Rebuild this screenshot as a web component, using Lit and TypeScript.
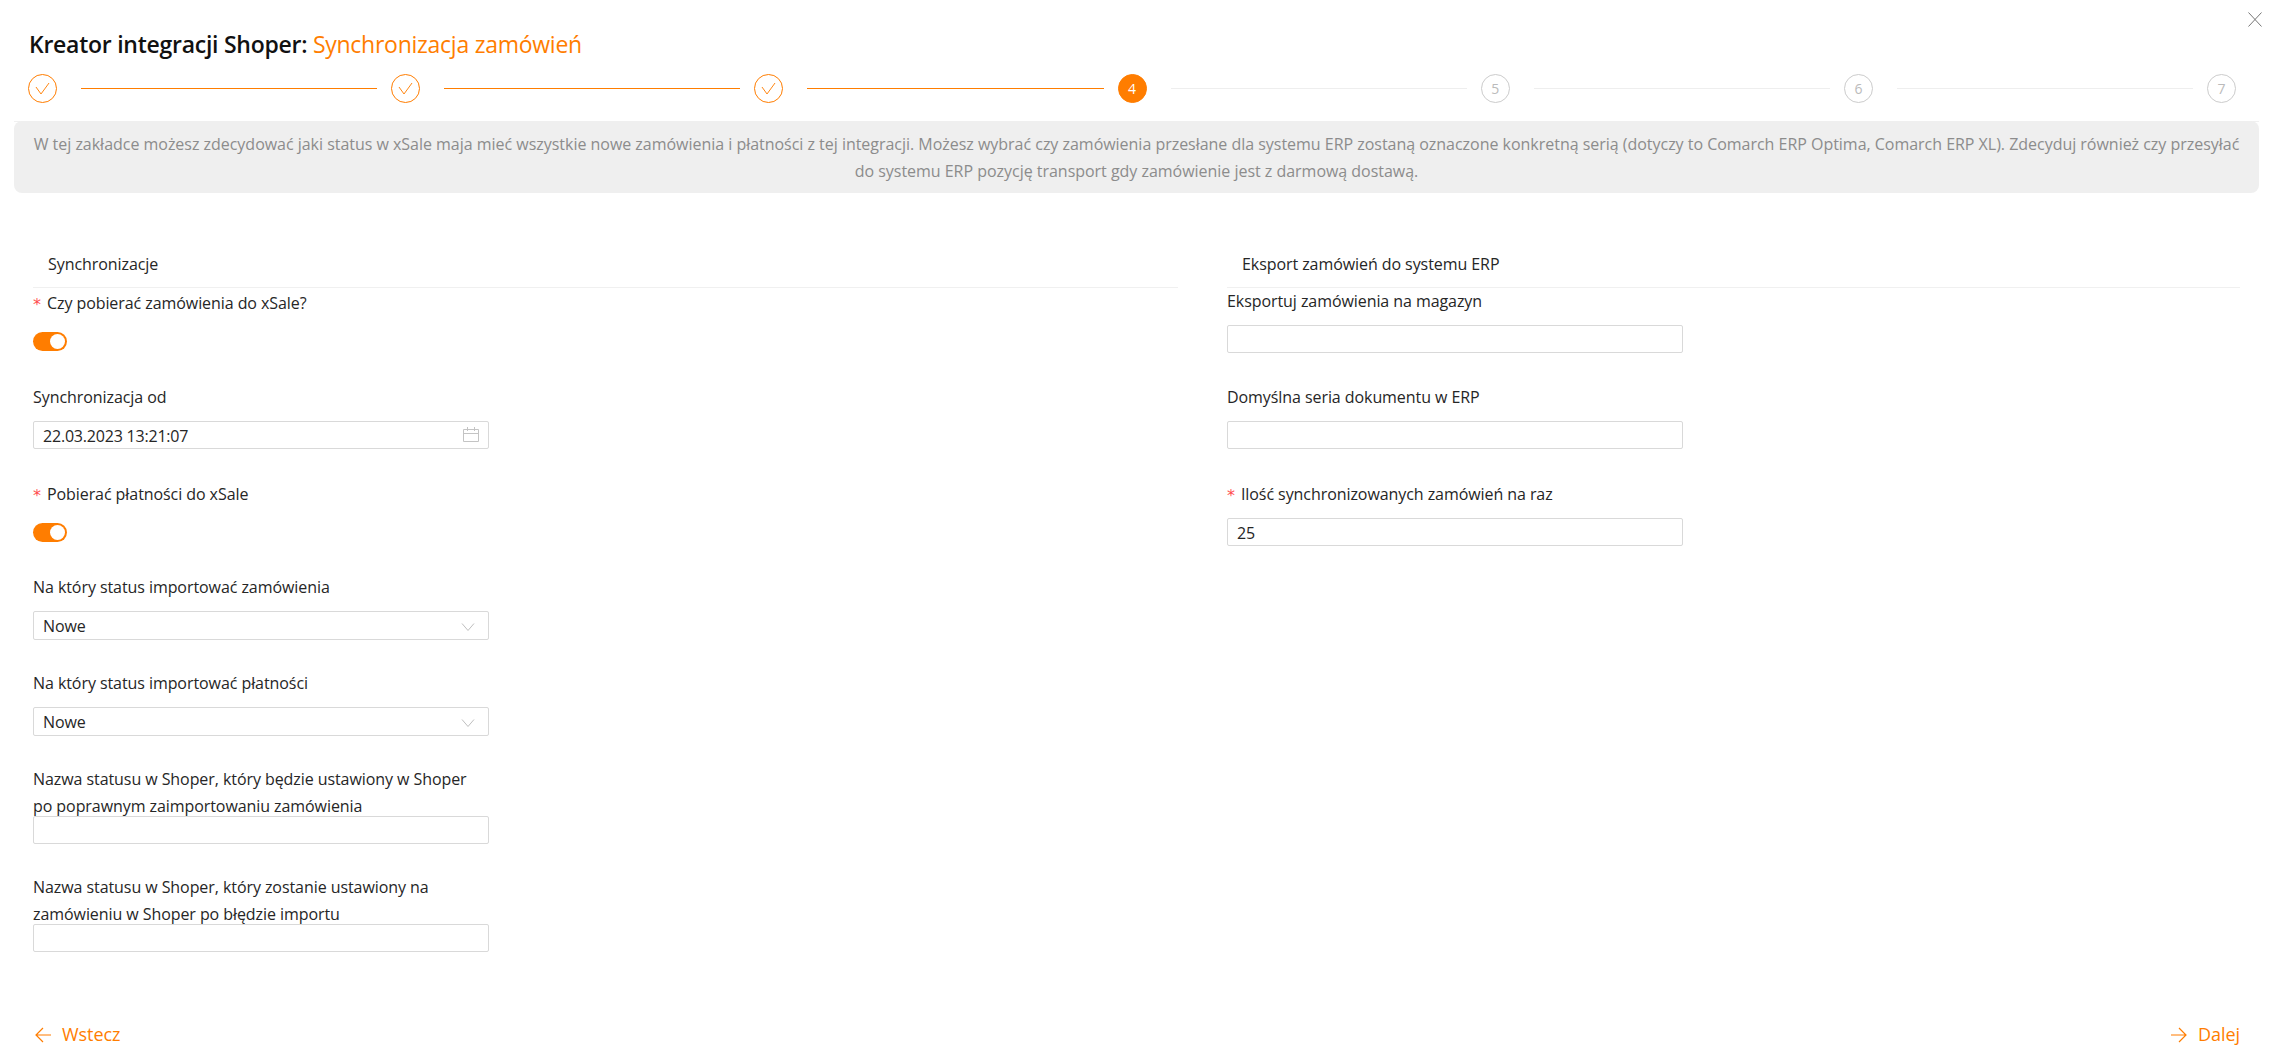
import { LitElement, html, css, svg } from "lit";
import { customElement } from "lit/decorators.js";

const checkIcon = svg`<path d="M7.5 12.9 L12.9 20.4 L21.5 8.6" fill="none" stroke="#ff7d00" stroke-width="1"/>`;

type Field = { label: string[]; req?: boolean; kind: "toggle" | "input" | "select" | "date"; value?: string; gap: number };

const left: Field[] = [
  { label: ["Czy pobierać zamówienia do xSale?"], req: true, kind: "toggle", gap: 2 },
  { label: ["Synchronizacja od"], kind: "date", value: "22.03.2023 13:21:07", gap: 33 },
  { label: ["Pobierać płatności do xSale"], req: true, kind: "toggle", gap: 32 },
  { label: ["Na który status importować zamówienia"], kind: "select", value: "Nowe", gap: 32 },
  { label: ["Na który status importować płatności"], kind: "select", value: "Nowe", gap: 30 },
  { label: ["Nazwa statusu w Shoper, który będzie ustawiony w Shoper", "po poprawnym zaimportowaniu zamówienia"], kind: "input", gap: 30 },
  { label: ["Nazwa statusu w Shoper, który zostanie ustawiony na", "zamówieniu w Shoper po błędzie importu"], kind: "input", gap: 30 },
];

const right: Field[] = [
  { label: ["Eksportuj zamówienia na magazyn"], kind: "input", gap: 0 },
  { label: ["Domyślna seria dokumentu w ERP"], kind: "input", gap: 31 },
  { label: ["Ilość synchronizowanych zamówień na raz"], req: true, kind: "input", value: "25", gap: 32 },
];

@customElement("app-root")
export class AppRoot extends LitElement {
  static styles = css`
    :host {
      display: block;
      width: 2275px;
      height: 1059px;
      position: relative;
      overflow: hidden;
      background: #fff;
      color: #262626;
      font-family: "Open Sans", "Liberation Sans", sans-serif;
      font-size: 16px;
      letter-spacing: -0.07px;
      line-height: 27px;
    }
    .close { position: absolute; left: 2247px; top: 11px; width: 16px; height: 16px; }
    .title {
      margin: 0;
      padding: 28px 0 0 29px;
      height: 32px;
      font-size: 23px;
      line-height: 32px;
      font-weight: 600;
      color: #111;
      letter-spacing: -0.26px;
    }
    .title span { color: #ff7d00; font-weight: 400; }
    .steps { display: flex; padding: 14px 39px 0 28px; }
    .step { flex: 1; display: flex; align-items: center; }
    .step:last-child { flex: 0 0 29px; }
    .circle {
      box-sizing: border-box;
      flex: 0 0 29px;
      height: 29px;
      border-radius: 50%;
      border: 1px solid #ccc;
      color: #bbb;
      font-size: 14px;
      line-height: 27px;
      text-align: center;
    }
    .circle.done { border-color: #ff7d00; }
    .circle.done svg { display: block; width: 27px; height: 27px; }
    .circle.active { background: #ff7d00; border-color: #ff7d00; color: #fff; }
    .line { flex: 1; height: 1px; margin: 0 14px 0 24px; background: #eee; }
    .line.done { background: #ff7d00; }
    .divider { margin: 18px 16px 0 14px; border-top: 1px solid #f0f0f0; }
    .info {
      margin: -1px 16px 0 14px;
      height: 72px;
      box-sizing: border-box;
      padding: 10px 0 0;
      background: #efefef;
      border-radius: 8px;
      color: #8c8c8c;
      text-align: center;
      letter-spacing: -0.024px;
      white-space: nowrap;
    }
    .cols { display: grid; grid-template-columns: 1145px 1013px; column-gap: 49px; padding: 58px 0 0 33px; }
    .head { padding: 0 0 9px 15px; border-bottom: 1px solid #f0f0f0; height: 27px; }
    .form { display: flex; flex-direction: column; }
    .label { height: 37px; white-space: nowrap; }
    .label.tall { height: 50px; }
    .req {
      color: #ff4d4f;
      font-family: "DejaVu Sans", sans-serif;
      font-size: 16px;
      vertical-align: -1px;
      margin-right: 6px;
    }
    .control {
      box-sizing: border-box;
      width: 456px;
      height: 28px;
      border: 1px solid #d9d9d9;
      border-radius: 2px;
      padding: 0 9px;
      display: flex;
      align-items: center;
      justify-content: space-between;
      line-height: 26px;
    }
    .control span { padding-top: 1px; }
    .control.date span { letter-spacing: -0.2px; }
    .control.sel { height: 29px; }
    .control svg { flex: none; }
    .control.sel svg { margin: 2px 4px 0 0; }
    .toggle {
      width: 34px;
      height: 19px;
      margin-top: 5px;
      border-radius: 10px;
      background: #ff7d00;
      display: flex;
      justify-content: flex-end;
      align-items: center;
      padding-right: 2px;
      box-sizing: border-box;
    }
    .toggle i { width: 15px; height: 15px; border-radius: 50%; background: #fff; display: block; }
    .footer {
      position: absolute;
      left: 35px;
      right: 35px;
      top: 1021px;
      display: flex;
      justify-content: space-between;
      color: #ff7d00;
      font-size: 18px;
    }
    .nav { display: flex; align-items: center; gap: 11px; }
  `;

  private field(f: Field) {
    return html`<div class="item" style="margin-top:${f.gap}px">
      <div class="label ${f.label.length > 1 ? "tall" : ""}">
        ${f.req ? html`<span class="req">*</span>` : ""}${f.label.map((l, i) => (i ? html`<br />${l}` : l))}
      </div>
      ${this.control(f)}
    </div>`;
  }

  private control(f: Field) {
    if (f.kind === "toggle") return html`<div class="toggle"><i></i></div>`;
    if (f.kind === "date")
      return html`<div class="control date"><span>${f.value}</span>
        <svg width="16" height="16" viewBox="0 0 16 16" fill="none" stroke="#c4c4c4"><path d="M.5 2.5h15v12h-15zM.5 6.5h15M4.5 0v4M11.5 0v4"/></svg></div>`;
    if (f.kind === "select")
      return html`<div class="control sel"><span>${f.value}</span>
        <svg width="14" height="10" viewBox="0 0 14 10" fill="none" stroke="#bfbfbf"><path d="M1 1.5l6 7 6-7"/></svg></div>`;
    return html`<div class="control"><span>${f.value ?? ""}</span></div>`;
  }

  render() {
    return html`
      <svg class="close" viewBox="0 0 16 16" fill="none" stroke="#777"><path d="M1.5 1.5l13 14M14.5 1.5l-13 14"/></svg>
      <h1 class="title">Kreator integracji Shoper: <span>Synchronizacja zamówień</span></h1>
      <div class="steps">
        ${[1, 2, 3, 4, 5, 6, 7].map(
          (n) => html`<div class="step">
            ${n < 4
              ? html`<div class="circle done"><svg viewBox="0 0 29 29">${checkIcon}</svg></div>`
              : html`<div class="circle ${n === 4 ? "active" : ""}">${n}</div>`}
            ${n < 7 ? html`<div class="line ${n < 4 ? "done" : ""}"></div>` : ""}
          </div>`
        )}
      </div>
      <div class="divider"></div>
      <div class="info">
        W tej zakładce możesz zdecydować jaki status w xSale maja mieć wszystkie nowe zamówienia i płatności z tej integracji. Możesz wybrać czy zamówienia przesłane dla systemu ERP zostaną oznaczone konkretną serią (dotyczy to Comarch ERP Optima, Comarch ERP XL). Zdecyduj również czy przesyłać<br />do systemu ERP pozycję transport gdy zamówienie jest z darmową dostawą.
      </div>
      <div class="cols">
        <div>
          <div class="head">Synchronizacje</div>
          <div class="form">${left.map((f) => this.field(f))}</div>
        </div>
        <div>
          <div class="head">Eksport zamówień do systemu ERP</div>
          <div class="form">${right.map((f) => this.field(f))}</div>
        </div>
      </div>
      <div class="footer">
        <div class="nav">
          <svg width="16" height="16" viewBox="0 0 16 16" fill="none" stroke="#ff7d00" stroke-width="1.2"><path d="M16 8H1M8 1L1 8l7 7"/></svg>Wstecz
        </div>
        <div class="nav">
          <svg width="16" height="16" viewBox="0 0 16 16" fill="none" stroke="#ff7d00" stroke-width="1.2"><path d="M0 8h15M8 1l7 7-7 7"/></svg>Dalej
        </div>
      </div>
    `;
  }
}
